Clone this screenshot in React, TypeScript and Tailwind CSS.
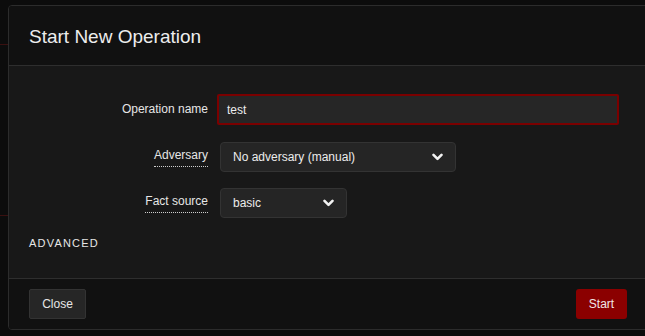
import React from 'react';

const Chevron: React.FC = () => (
  <svg width="11" height="8" viewBox="0 0 11 8" className="shrink-0">
    <path d="M1.5 1.8 L5.5 5.8 L9.5 1.8" fill="none" stroke="#f2f2f2" strokeWidth="2.6" strokeLinecap="round" strokeLinejoin="round" />
  </svg>
);

const Label: React.FC<{ text: string; dotted?: boolean }> = ({ text, dotted }) => (
  <div className="w-[199px] flex justify-end shrink-0">
    <span className={dotted ? 'text-[12px] text-[#e6e6e6] leading-[15px] pb-[3px] border-b border-dotted border-[#cfcfcf]' : 'text-[12px] text-[#e6e6e6] leading-[15px]'}>
      {text}
    </span>
  </div>
);

export default function App() {
  return (
    <div
      className="relative w-[645px] h-[336px] overflow-hidden bg-[#0c0c0c] pt-[5px] pl-[8px]"
      style={{ fontFamily: '"Liberation Sans", Arial, sans-serif' }}
    >
      <div className="absolute left-0 top-[44px] w-[8px] h-px bg-[#3a1010]" />
      <div className="absolute left-0 top-[215px] w-[8px] h-px bg-[#3a1010]" />

      <div className="w-[660px] h-[325px] flex flex-col border border-[#2c2c2c] rounded-[4px] overflow-hidden">
        <div className="h-[60px] shrink-0 bg-[#111111] border-b border-[#2e2e2e] flex items-center pl-[20px]">
          <h1 className="text-[19px] text-[#ededed] font-normal leading-none mt-[2px]">Start New Operation</h1>
        </div>

        <div className="flex-1 bg-[#181818] pt-[28px] flex flex-col">
          <div className="flex items-center h-[31px]">
            <Label text="Operation name" />
            <div className="ml-[9px] w-[402px] h-[31px] bg-[#262626] border-2 border-[#7a0000] rounded-[2px] flex items-center pl-[8px]">
              <span className="text-[12px] text-[#ececec]">test</span>
            </div>
          </div>

          <div className="flex items-center h-[30px] mt-[17px]">
            <Label text="Adversary" dotted />
            <div className="ml-[12px] w-[236px] h-[30px] bg-[#252525] border border-[#333333] rounded-[4px] flex items-center justify-between pl-[12px] pr-[12px]">
              <span className="text-[12px] text-[#ececec]">No adversary (manual)</span>
              <Chevron />
            </div>
          </div>

          <div className="flex items-center h-[30px] mt-[16px]">
            <Label text="Fact source" dotted />
            <div className="ml-[12px] w-[127px] h-[30px] bg-[#252525] border border-[#333333] rounded-[4px] flex items-center justify-between pl-[12px] pr-[12px]">
              <span className="text-[12px] text-[#ececec]">basic</span>
              <Chevron />
            </div>
          </div>

          <div className="pl-[20px] mt-[12px]">
            <span className="text-[11px] tracking-[1.2px] text-[#e6e6e6]">ADVANCED</span>
          </div>
        </div>

        <div className="h-[51px] shrink-0 bg-[#111111] border-t border-[#2e2e2e] flex items-center pl-[20px] pr-[40px] justify-between">
          <button className="h-[30px] w-[57px] bg-[#262626] border border-[#333333] rounded-[2px] text-[12px] text-[#e6e6e6]">
            Close
          </button>
          <button className="h-[30px] w-[51px] bg-[#8b0000] rounded-[3px] text-[12px] text-[#f0e6e6]">
            Start
          </button>
        </div>
      </div>
    </div>
  );
}
